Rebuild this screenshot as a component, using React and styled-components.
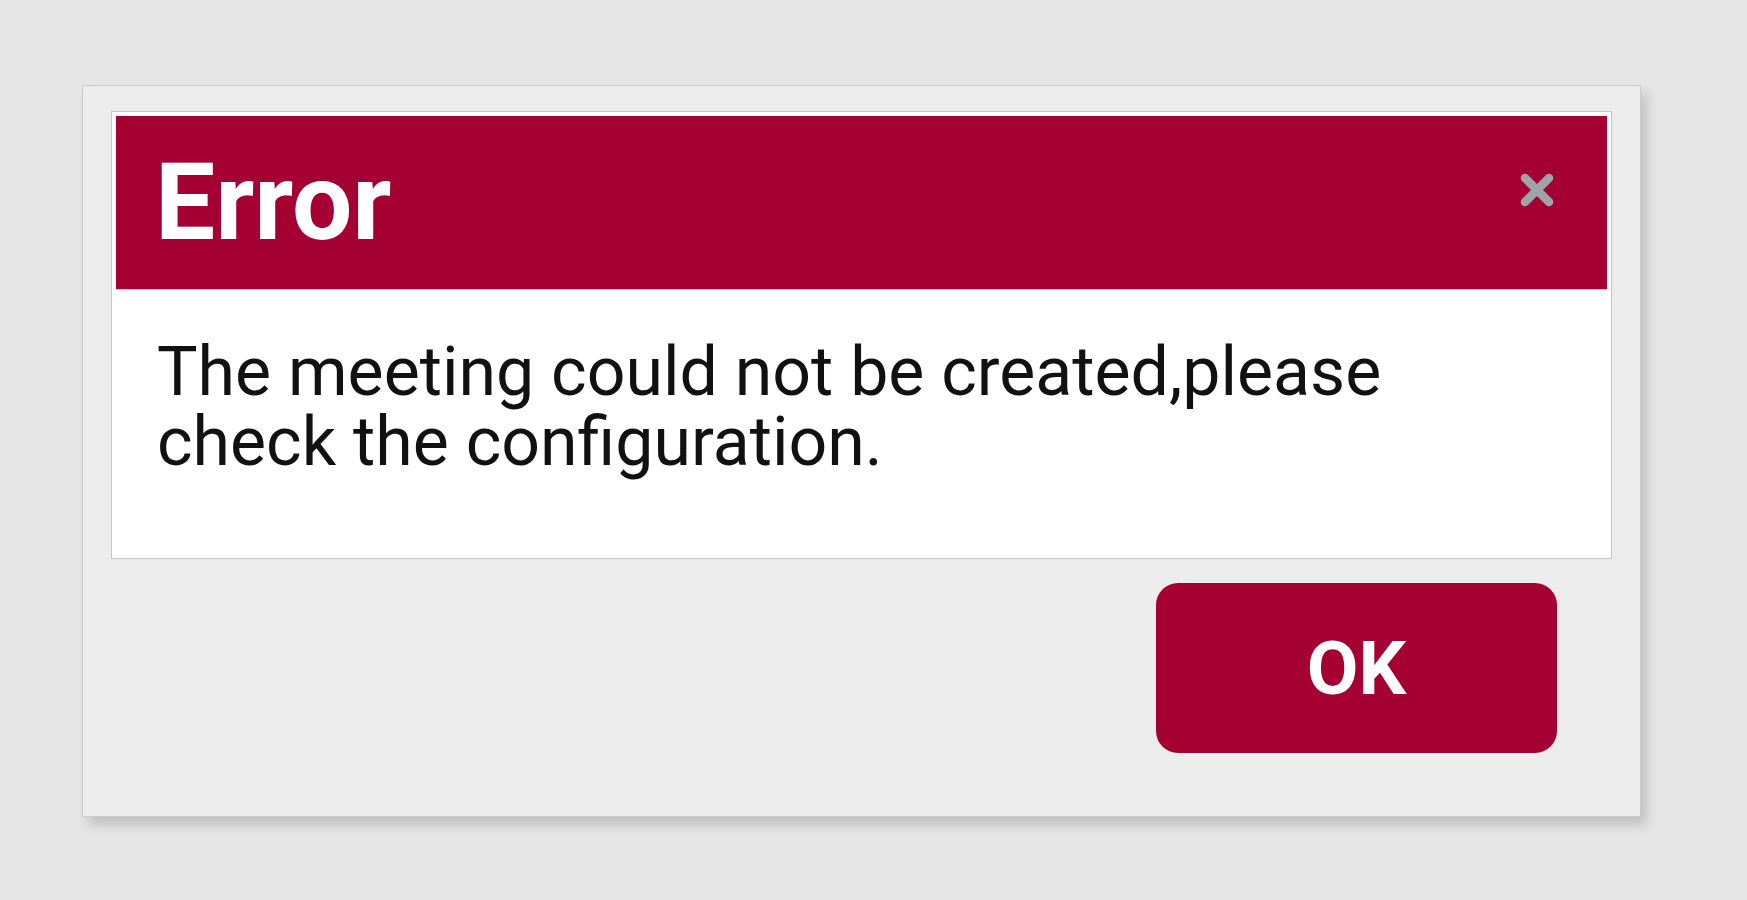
import React from "react";
import styled, { createGlobalStyle } from "styled-components";

const GlobalStyle = createGlobalStyle`
  html, body {
    margin: 0;
    padding: 0;
    background: #e5e5e5;
    font-family: Roboto, "Noto Sans", "Liberation Sans", sans-serif;
  }
`;

const BRAND_RED = "#a50034";

const Page = styled.main`
  min-height: 900px;
  padding: 85px 0 0 82px;
  box-sizing: border-box;
`;

const Dialog = styled.section`
  width: 1559px;
  height: 732px;
  box-sizing: border-box;
  background: #ececec;
  border: 1px solid #cbcbcb;
  border-radius: 2px;
  box-shadow: 6px 8px 12px rgba(0, 0, 0, 0.16);
  padding: 25px 28px 0 28px;
  display: flex;
  flex-direction: column;
`;

const Panel = styled.div`
  border: 1px solid #c6c6c6;
  background: #fff;
  height: 448px;
  box-sizing: border-box;
  display: flex;
  flex-direction: column;
`;

const Header = styled.header`
  margin: 4px 4px 0 4px;
  height: 173px;
  background: ${BRAND_RED};
  border-bottom: 1px solid #c9c9c9;
  display: flex;
  align-items: center;
  justify-content: space-between;
  padding: 0 51px 0 39px;
`;

const Title = styled.h1`
  margin: 0;
  color: #fff;
  font-size: 107px;
  font-weight: 700;
  line-height: 1;
`;

const CloseButton = styled.button`
  border: 0;
  background: transparent;
  padding: 0;
  width: 38px;
  height: 38px;
  margin-top: -26px;
  display: flex;
  align-items: center;
  justify-content: center;
  cursor: pointer;
`;

const Body = styled.div`
  flex: 1;
  padding: 47px 40px 0 45px;
`;

const Message = styled.p`
  margin: 0;
  color: #111;
  font-size: 68px;
  line-height: 70px;
  font-weight: 400;
  max-width: 1300px;
`;

const Footer = styled.footer`
  display: flex;
  justify-content: flex-end;
  padding: 24px 55px 0 0;
`;

const OkButton = styled.button`
  width: 401px;
  height: 170px;
  border: 0;
  border-radius: 22px;
  background: ${BRAND_RED};
  color: #fff;
  font-family: inherit;
  font-size: 75px;
  font-weight: 700;
  cursor: pointer;
`;

const CloseIcon = () => (
  <svg width="36" height="36" viewBox="0 0 36 36">
    <path
      d="M6 6 L30 30 M30 6 L6 30"
      stroke="#9ea5a8"
      strokeWidth="8.5"
      strokeLinecap="round"
      fill="none"
    />
  </svg>
);

export default function App() {
  return (
    <>
      <GlobalStyle />
      <Page>
        <Dialog role="alertdialog">
          <Panel>
            <Header>
              <Title>Error</Title>
              <CloseButton aria-label="Close">
                <CloseIcon />
              </CloseButton>
            </Header>
            <Body>
              <Message>
                The meeting could not be created,please check the configuration.
              </Message>
            </Body>
          </Panel>
          <Footer>
            <OkButton>OK</OkButton>
          </Footer>
        </Dialog>
      </Page>
    </>
  );
}
